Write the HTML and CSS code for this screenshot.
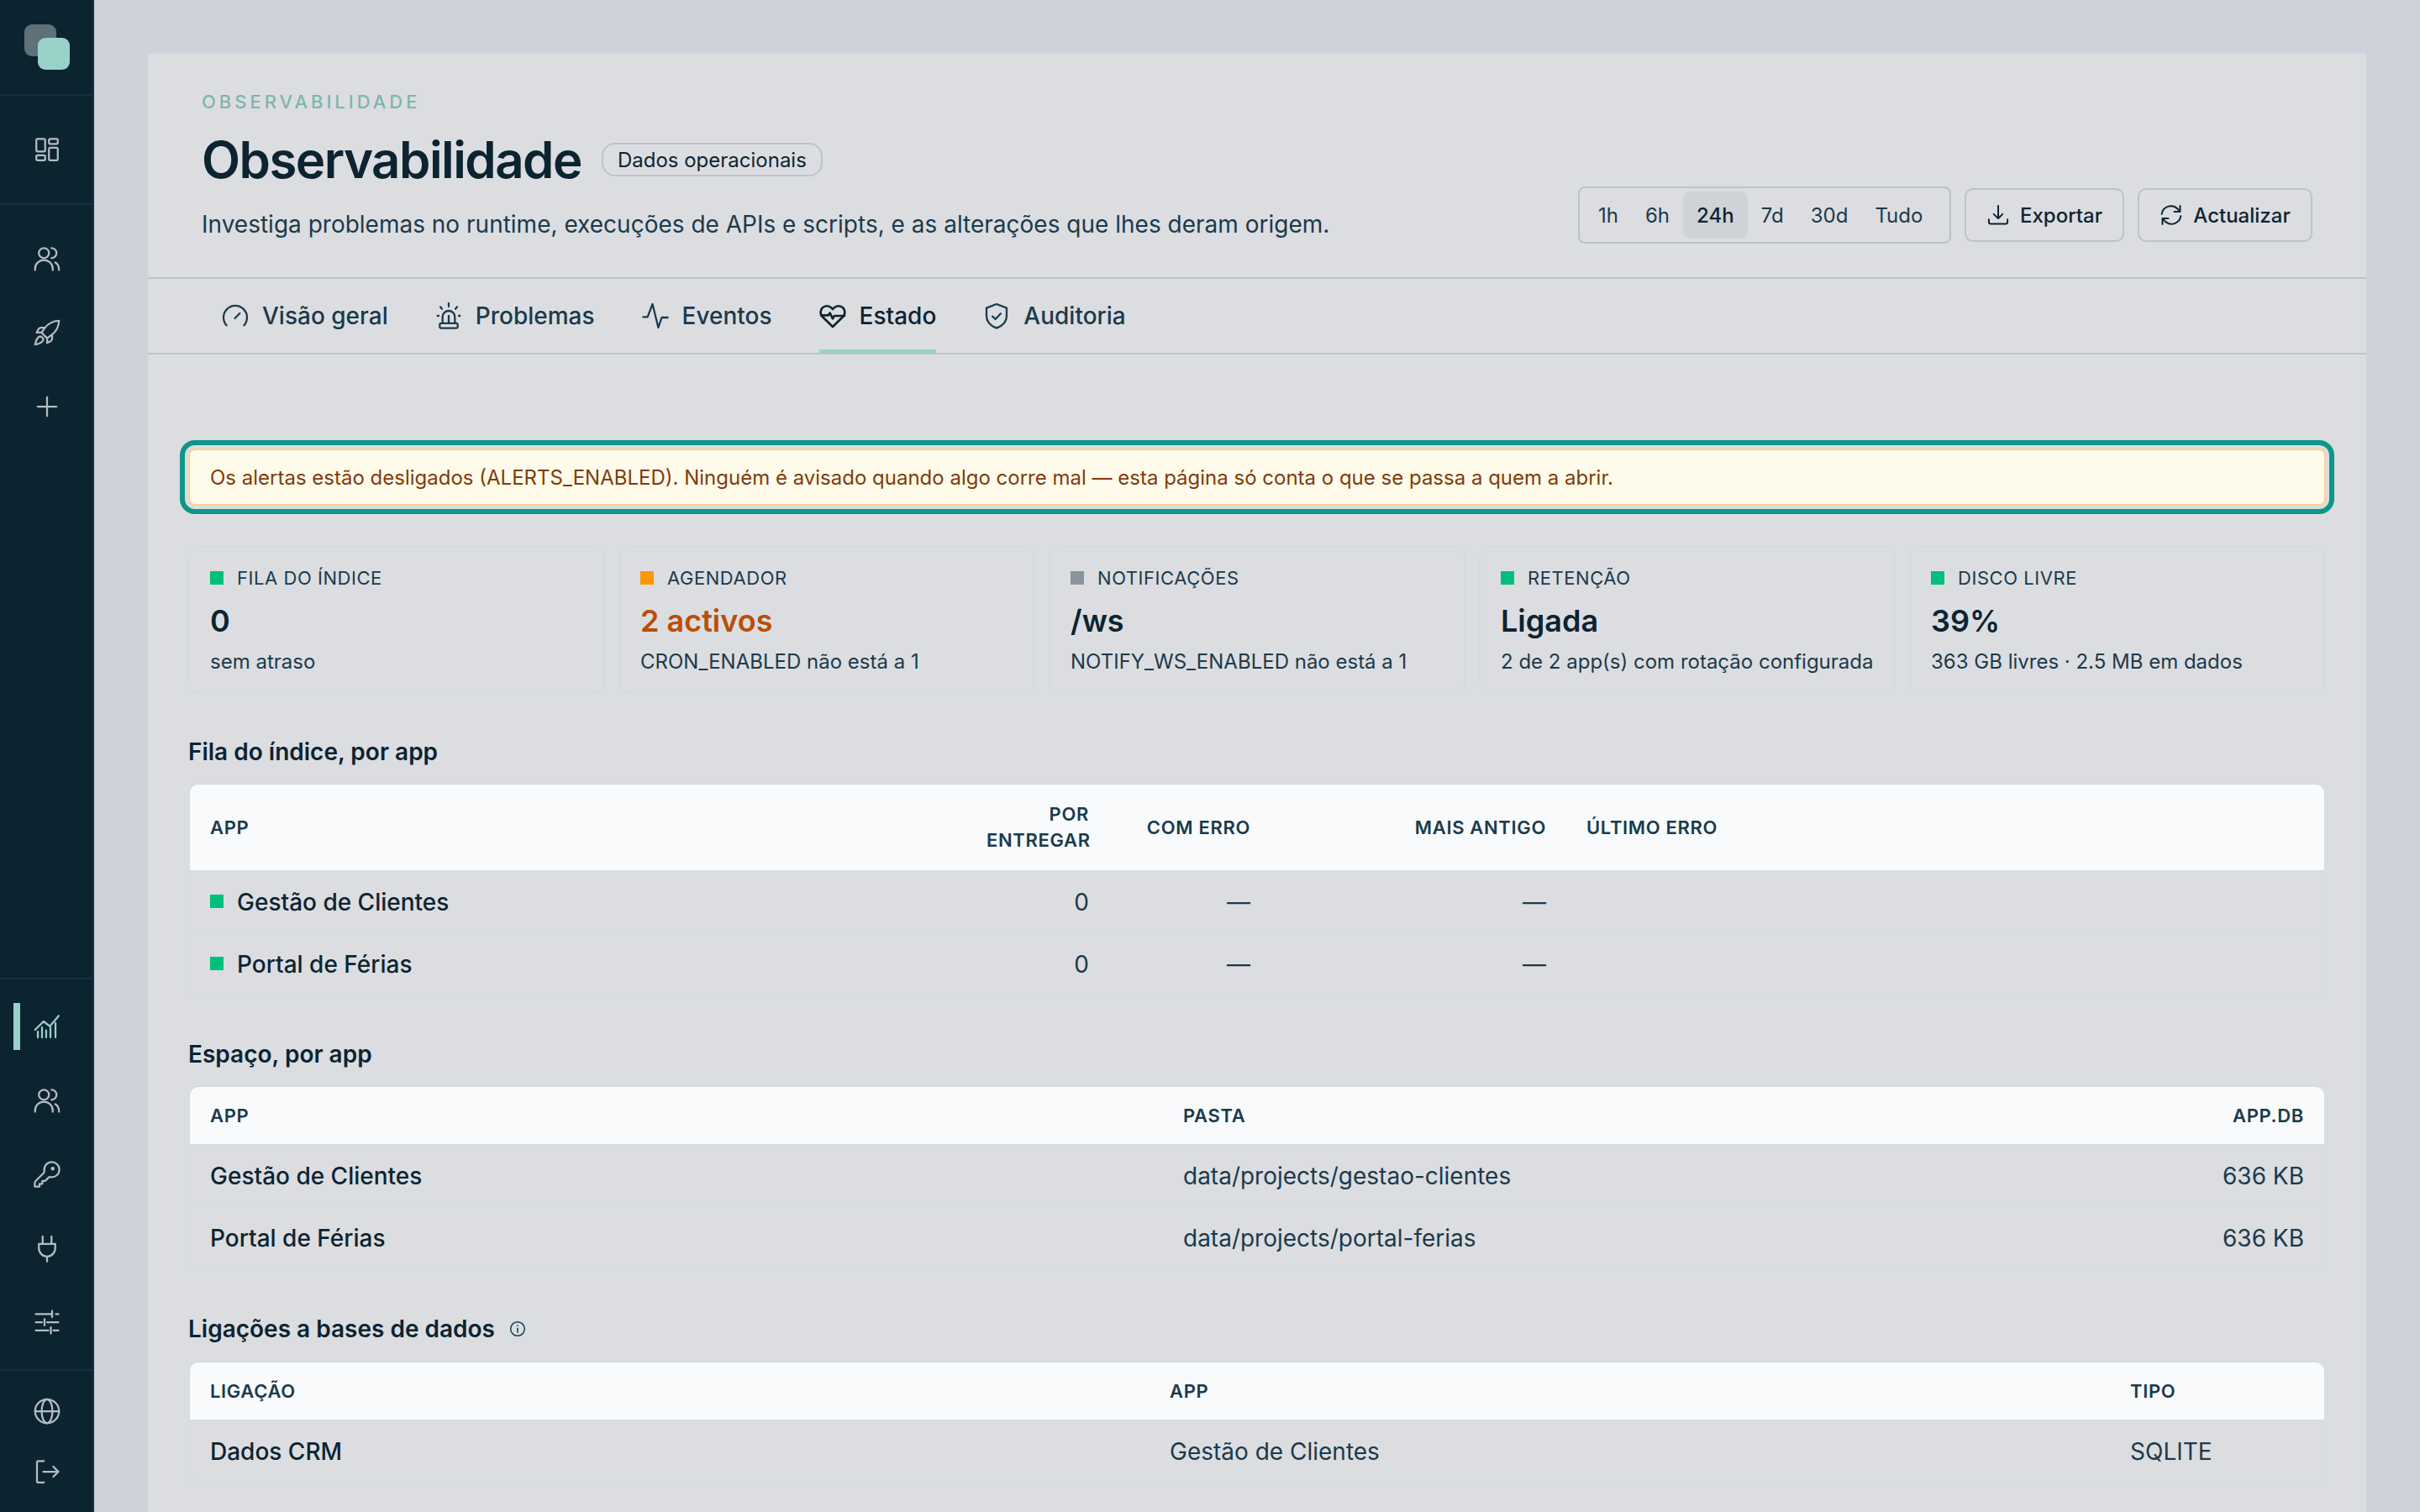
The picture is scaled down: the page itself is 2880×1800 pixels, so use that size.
FILE: index.html
```html
<!DOCTYPE html>
<html lang="pt">
<head>
<meta charset="utf-8">
<title>Observabilidade</title>
<link rel="stylesheet" href="styles.css">
</head>
<body>
<div class="app">
  <aside class="rail">
    <div class="rail-logo"><span class="logo"><span class="logo-back"></span><span class="logo-front"></span></span></div>
    <div class="rail-sec rail-home">
      <a class="rail-item"><svg class="ico" viewBox="0 0 24 24"><rect x="3.5" y="3.5" width="7" height="10" rx="1"/><rect x="3.5" y="16.5" width="7" height="4" rx="1"/><rect x="13.5" y="3.500" width="7" height="4" rx="1"/><rect x="13.5" y="10.5" width="7" height="10" rx="1"/></svg></a>
    </div>
    <div class="rail-sec rail-apps">
      <a class="rail-item"><svg class="ico" viewBox="0 0 24 24"><circle cx="9.5" cy="7.5" r="4"/><path d="M2.5 21v-1a7 7 0 0 1 14 0v1M15.5 3.500a4 4 0 0 1 0 8M18.500 15c2 1 3 3 3 6"/></svg></a>
      <a class="rail-item"><svg class="ico" viewBox="0 0 24 24"><path d="M21.500 2.500c-5 .3-8.800 2.400-11.300 5.800L7.600 12l4.400 4.400 3.700-2.600c3.400-2.500 5.500-6.300 5.800-11.300zM10.500 8H7.200c-.9 0-1.500.4-2 1.200L3.800 12l3.800-.2M16 13.500v3.300c0 .9-.4 1.500-1.200 2L12 20.200l.2-3.800M5.800 15.200c-1.600 1-2.700 3.200-3.300 6.300 3-.6 5.300-1.700 6.300-3.300.8-1.400-1.600-3.800-3-3z"/></svg></a>
      <a class="rail-item"><svg class="ico" viewBox="0 0 24 24"><path d="M12 4.500v15M4.500 12h15"/></svg></a>
    </div>
    <div class="rail-spacer"></div>
    <div class="rail-sec rail-admin">
      <a class="rail-item is-active"><svg class="ico" viewBox="0 0 24 24"><path d="M2.500 14.700 9.200 8l5 3.800 7.100-8.300M4.700 20.700V16M8 20.700v-8M11.300 20.700v-5.600M14.700 20.700v-8M18.700 20.700V9.300"/></svg></a>
      <a class="rail-item"><svg class="ico" viewBox="0 0 24 24"><circle cx="9.500" cy="7.500" r="4"/><path d="M2.500 21v-1a7 7 0 0 1 14 0v1M15.500 3.500a4 4 0 0 1 0 8M18.500 15c2 1 3 3 3 6"/></svg></a>
      <a class="rail-item"><svg class="ico" viewBox="0 0 24 24"><path d="M21.750 8.250a6 6 0 0 1-7.029 5.912c-.563-.097-1.159.026-1.563.43L10.500 17.250H8.250v2.250H6v2.250H2.250v-2.818c0-.597.237-1.170.659-1.591l6.499-6.499c.404-.404.527-1 .43-1.563A6 6 0 1 1 21.750 8.250Z"/><circle cx="16.500" cy="7.500" r=".8"/></svg></a>
      <a class="rail-item"><svg class="ico" viewBox="0 0 24 24"><path d="M8.500 2.500v6M15.500 2.500v6M5.500 8.500h13v3.500a6.500 6.500 0 0 1-13 0zM12 18.500v4"/></svg></a>
      <a class="rail-item"><svg class="ico" viewBox="0 0 24 24"><path d="M3 5.500h12M19 5.500h2M16 3v5M3 12h5M12 12h9M10 9.500v5M3 18.500h10M17 18.500h4M15 16v5"/></svg></a>
    </div>
    <div class="rail-sec rail-foot">
      <a class="rail-item"><svg class="ico" viewBox="0 0 24 24"><circle cx="12" cy="12" r="9.500"/><ellipse cx="12" cy="12" rx="4.300" ry="9.500"/><path d="M2.500 12h19"/></svg></a>
      <a class="rail-item"><svg class="ico" viewBox="0 0 24 24"><path d="M9.500 3.500H5a1 1 0 0 0-1 1v15a1 1 0 0 0 1 1h4.500M9 12h12M17 8l4 4-4 4"/></svg></a>
    </div>
  </aside>

  <main class="main">
    <section class="panel">
      <header class="head">
        <div class="head-text">
          <div class="eyebrow">Observabilidade</div>
          <div class="title-row">
            <h1 class="title">Observabilidade</h1>
            <span class="badge">Dados operacionais</span>
          </div>
          <p class="desc">Investiga problemas no runtime, execuções de APIs e scripts, e as alterações que lhes deram origem.</p>
        </div>
        <div class="tools">
          <div class="range">
            <span class="range-opt">1h</span>
            <span class="range-opt">6h</span>
            <span class="range-opt is-on">24h</span>
            <span class="range-opt">7d</span>
            <span class="range-opt">30d</span>
            <span class="range-opt">Tudo</span>
          </div>
          <button class="btn btn-export"><svg class="ico-btn" viewBox="0 0 24 24"><path d="M12 2.500v13M7.500 11 12 15.500 16.500 11M2.500 16.500V19a2 2 0 0 0 2 2h15a2 2 0 0 0 2-2v-2.500"/></svg>Exportar</button>
          <button class="btn btn-refresh"><svg class="ico-btn" viewBox="0 0 24 24"><path d="M2.300 11a9.500 9.500 0 0 1 16-5.500L21 8.500M21 2.500v6h-6M21.700 13a9.500 9.500 0 0 1-16 5.500L3 15.500M3 21.500v-6h6"/></svg>Actualizar</button>
        </div>
      </header>

      <nav class="tabs">
        <a class="tab"><svg class="ico-tab" viewBox="0 0 24 24"><path d="M4.200 20.500A10.500 10.500 0 1 1 19.800 20.500M11.600 14.200 16 9.800"/></svg>Visão geral</a>
        <a class="tab"><svg class="ico-tab" viewBox="0 0 24 24"><path d="M6.500 18.700V13a5.500 5.500 0 0 1 11 0v5.700M5 18.700h14a1 1 0 0 1 1 1V22a1 1 0 0 1-1 1H5a1 1 0 0 1-1-1v-2.300a1 1 0 0 1 1-1zM12 12v6.700M12 .8v3M4.500 4 6 5.800M19.500 4 18 5.800M2 12h1M21 12h1"/></svg>Problemas</a>
        <a class="tab"><svg class="ico-tab" viewBox="0 0 24 24"><path d="M1 13h4L9.400 1.500l5.200 21 3-9h5.400"/></svg>Eventos</a>
        <a class="tab is-active"><svg class="ico-tab" viewBox="0 0 24 24"><path d="M12 21.700 2.800 12.800a5.800 5.800 0 0 1 0-8 5.700 5.700 0 0 1 8 0L12 6l1.200-1.200a5.700 5.700 0 0 1 8 0 5.800 5.800 0 0 1 0 8z"/><path d="M1.500 11.500H8l1.500-2 2.500 5 1.500-2.500h9"/></svg>Estado</a>
        <a class="tab"><svg class="ico-tab" viewBox="0 0 24 24"><path d="M12 1.500 21 5v7c0 5.500-3.800 9-9 11-5.200-2-9-5.500-9-11V5zM8.300 12.500l2.700 2.500 4.700-5"/></svg>Auditoria</a>
      </nav>

      <div class="content">
        <div class="alert">Os alertas estão desligados (ALERTS_ENABLED). Ninguém é avisado quando algo corre mal — esta página só conta o que se passa a quem a abrir.</div>

        <div class="cards">
          <article class="card">
            <div class="card-label"><span class="dot dot-ok"></span>Fila do índice</div>
            <div class="card-value">0</div>
            <div class="card-sub">sem atraso</div>
          </article>
          <article class="card">
            <div class="card-label"><span class="dot dot-warn"></span>Agendador</div>
            <div class="card-value card-value-warn">2 activos</div>
            <div class="card-sub">CRON_ENABLED não está a 1</div>
          </article>
          <article class="card">
            <div class="card-label"><span class="dot dot-off"></span>Notificações</div>
            <div class="card-value">/ws</div>
            <div class="card-sub">NOTIFY_WS_ENABLED não está a 1</div>
          </article>
          <article class="card">
            <div class="card-label"><span class="dot dot-ok"></span>Retenção</div>
            <div class="card-value">Ligada</div>
            <div class="card-sub">2 de 2 app(s) com rotação configurada</div>
          </article>
          <article class="card">
            <div class="card-label"><span class="dot dot-ok"></span>Disco livre</div>
            <div class="card-value">39%</div>
            <div class="card-sub">363 GB livres · 2.5 MB em dados</div>
          </article>
        </div>

        <h2 class="sec-title">Fila do índice, por app</h2>
        <div class="tbl-wrap">
          <table class="tbl tbl-queue">
            <thead>
              <tr><th class="c-app">App</th><th class="c-pend num">Por entregar</th><th class="c-err num">Com erro</th><th class="c-old num">Mais antigo</th><th>Último erro</th></tr>
            </thead>
            <tbody>
              <tr><td><span class="dot dot-ok"></span>Gestão de Clientes</td><td class="num">0</td><td class="num">—</td><td class="num">—</td><td></td></tr>
              <tr><td><span class="dot dot-ok"></span>Portal de Férias</td><td class="num">0</td><td class="num">—</td><td class="num">—</td><td></td></tr>
            </tbody>
          </table>
        </div>

        <h2 class="sec-title">Espaço, por app</h2>
        <div class="tbl-wrap">
          <table class="tbl tbl-space">
            <thead>
              <tr><th class="c-sapp">App</th><th>Pasta</th><th class="c-db num">app.db</th></tr>
            </thead>
            <tbody>
              <tr><td>Gestão de Clientes</td><td>data/projects/gestao-clientes</td><td class="num">636 KB</td></tr>
              <tr><td>Portal de Férias</td><td>data/projects/portal-ferias</td><td class="num">636 KB</td></tr>
            </tbody>
          </table>
        </div>

        <h2 class="sec-title sec-title-info">Ligações a bases de dados<span class="info"><svg class="ico-info" viewBox="0 0 24 24"><circle cx="12" cy="12" r="10"/><path d="M12 11v6M12 7v.5"/></svg></span></h2>
        <div class="tbl-wrap">
          <table class="tbl tbl-conn">
            <thead>
              <tr><th class="c-lig">Ligação</th><th class="c-lapp">App</th><th>Tipo</th></tr>
            </thead>
            <tbody>
              <tr><td>Dados CRM</td><td>Gestão de Clientes</td><td>SQLITE</td></tr>
            </tbody>
          </table>
        </div>
      </div>
    </section>
  </main>
</div>
</body>
</html>
```

FILE: styles.css
```css
* { box-sizing: border-box; }
html, body { margin: 0; height: 100%; }
body {
  width: 2880px;
  height: 1800px;
  overflow: hidden;
  background: #cfd2da;
  color: #0c2431;
  font-family: Inter, "Liberation Sans", sans-serif;
}
.app { display: flex; height: 1800px; }

/* rail */
.rail {
  width: 112px;
  flex: none;
  display: flex;
  flex-direction: column;
  background: #0c2430;
  border-right: 2px solid #14303f;
}
.rail-logo {
  height: 114px;
  flex: none;
  display: flex;
  align-items: center;
  justify-content: center;
  border-bottom: 2px solid #14303f;
}
.logo { display: grid; width: 54px; height: 54px; margin-left: 2px; }
.logo-back, .logo-front { grid-area: 1 / 1; width: 38px; height: 38px; border-radius: 9px; }
.logo-back { background: #5f7079; }
.logo-front { background: #99d1c9; margin: 16px 0 0 16px; }
.rail-sec { flex: none; display: flex; flex-direction: column; }
.rail-home { height: 130px; justify-content: center; border-bottom: 2px solid #14303f; }
.rail-apps { padding-top: 20px; }
.rail-spacer { flex: 1; }
.rail-admin { padding: 12px 0 12px; border-top: 2px solid #14303f; }
.rail-foot { padding: 12px 0 12px; border-top: 2px solid #14303f; }
.rail-foot .rail-item { height: 72px; }
.rail-item {
  height: 88px;
  display: flex;
  align-items: center;
  justify-content: center;
  color: #b5bcc0;
  margin-right: -2px;
}
.rail-item.is-active {
  color: #99d1c9;
  background: linear-gradient(#99d1c9, #99d1c9) 16px center / 8px 56px no-repeat;
}
.ico { width: 36px; height: 36px; fill: none; stroke: currentColor; stroke-width: 1.5; stroke-linecap: round; stroke-linejoin: round; }

/* panel */
.main { flex: 1; min-width: 0; padding: 64px 64px 0; }
.panel { height: 1736px; background: #dcdde1; overflow: hidden; }
.head {
  height: 268px;
  display: flex;
  justify-content: space-between;
  align-items: flex-end;
  padding: 30px 64px 40px;
  border-bottom: 2px solid #bcc2c9;
}
.head-text { margin-bottom: 2px; }
.eyebrow { font-size: 22px; line-height: 28px; letter-spacing: 0.18em; font-weight: 500; text-transform: uppercase; color: #7fb5ae; }
.title-row { display: flex; align-items: center; gap: 24px; margin-top: 19px; }
.title { margin: 0; font-size: 60px; line-height: 72px; font-weight: 600; letter-spacing: -0.026em; }
.badge { height: 40px; padding: 0 17px; display: flex; align-items: center; font-size: 24px; border: 2px solid #bcc2c9; border-radius: 16px; color: #0c2431; }
.desc { margin: 20px 0 0; font-size: 28px; line-height: 42px; color: #1b3a4b; }
.tools { display: flex; align-items: center; gap: 16px; }
.range { height: 68px; width: 444px; display: flex; align-items: center; padding: 4px 6px; border: 2px solid #bcc2c9; border-radius: 8px; }
.range-opt { height: 56px; padding: 0 16px; display: flex; align-items: center; font-size: 24px; color: #1b3a4b; border-radius: 8px; }
.range-opt.is-on { background: #cfd2d7; color: #0c2431; font-weight: 500; }
.btn {
  height: 64px;
  display: flex;
  align-items: center;
  justify-content: center;
  gap: 12px;
  background: transparent;
  border: 2px solid #bcc2c9;
  border-radius: 10px;
  font: 500 24px Inter, "Liberation Sans", sans-serif;
  color: #0c2431;
  padding: 0;
}
.btn-export { width: 190px; }
.btn-refresh { width: 208px; }
.ico-btn { width: 28px; height: 28px; fill: none; stroke: currentColor; stroke-width: 1.7; stroke-linecap: round; stroke-linejoin: round; }

/* tabs */
.tabs { height: 90px; display: flex; gap: 56px; padding-left: 88px; border-bottom: 2px solid #bcc2c9; }
.tab {
  height: 88px;
  padding-top: 4px;
  display: flex;
  align-items: center;
  gap: 16px;
  font-size: 28px;
  font-weight: 500;
  color: #1b3a4b;
  border-bottom: 4px solid transparent;
}
.tab.is-active { color: #0c2431; border-bottom-color: #99d1c9; }
.ico-tab { width: 32px; height: 32px; fill: none; stroke: currentColor; stroke-width: 1.7; stroke-linecap: round; stroke-linejoin: round; }
.tab.is-active .ico-tab { stroke-width: 2; }

/* content */
.content { padding: 112px 48px 0; }
.alert {
  height: 68px;
  display: flex;
  align-items: center;
  padding: 0 24px;
  font-size: 24px;
  color: #7f3b0c;
  background: #fffbea;
  border: 2px solid #fdd28f;
  border-radius: 8px;
  outline: 6px solid #0e9688;
  outline-offset: 4px;
}
.cards { display: grid; grid-template-columns: repeat(5, 1fr); gap: 16px; margin-top: 48px; }
.card { height: 176px; padding: 18px 24px; border: 2px solid #d3dbe1; border-radius: 12px; }
.card-label { display: flex; align-items: center; height: 36px; font-size: 22px; font-weight: 400; text-transform: uppercase; letter-spacing: 0.025em; color: #1b3a4b; }
.dot { display: inline-block; flex: none; width: 16px; height: 16px; margin-right: 16px; }
.dot-ok { background: #00bf7a; }
.dot-warn { background: #ff9800; }
.dot-off { background: #8a949c; }
.card-value { margin-top: 8px; font-size: 36px; line-height: 50px; font-weight: 600; color: #0c2431; }
.card-value-warn { color: #b94e07; }
.card-sub { margin-top: 6px; font-size: 24px; line-height: 36px; color: #1b3a4b; }

.sec-title { margin: 48px 0 16px; font-size: 28px; line-height: 42px; font-weight: 600; color: #0c2431; }
.sec-title-info { height: 44px; display: flex; align-items: center; gap: 14px; }
.info { width: 27px; height: 27px; display: flex; align-items: center; justify-content: center; background: #d8dfe3; }
.ico-info { width: 20px; height: 20px; fill: none; stroke: #1b3a4b; stroke-width: 1.8; stroke-linecap: round; }

.tbl-wrap { border: 2px solid #d6dde2; border-radius: 12px; overflow: hidden; }
.tbl { width: 100%; table-layout: fixed; border-collapse: separate; border-spacing: 0; }
.tbl th {
  height: 70px;
  padding: 0 24px;
  background: #f8fafc;
  border-bottom: 2px solid #d6dde2;
  font-size: 22px;
  line-height: 31px;
  font-weight: 600;
  text-align: left;
  text-transform: uppercase;
  letter-spacing: 0.03em;
  color: #1b3a4b;
}
.tbl-queue th { height: 104px; }
.tbl td { height: 74px; padding: 0 24px; font-size: 28px; color: #1b3a4b; border-bottom: 2px solid #d6dde2; }
.tbl td:first-child { color: #0c2431; font-weight: 500; }
.tbl tbody tr:last-child td { height: 72px; border-bottom: 0; }
.tbl .num { text-align: right; }
.tbl .dot { vertical-align: 3px; }
.c-app { width: 924px; }
.c-pend { width: 170px; }
.c-err { width: 192px; }
.c-old { width: 352px; }
.c-sapp { width: 1158px; }
.c-db { width: 400px; }
.c-lig { width: 1142px; }
.c-lapp { width: 1143px; }
```
